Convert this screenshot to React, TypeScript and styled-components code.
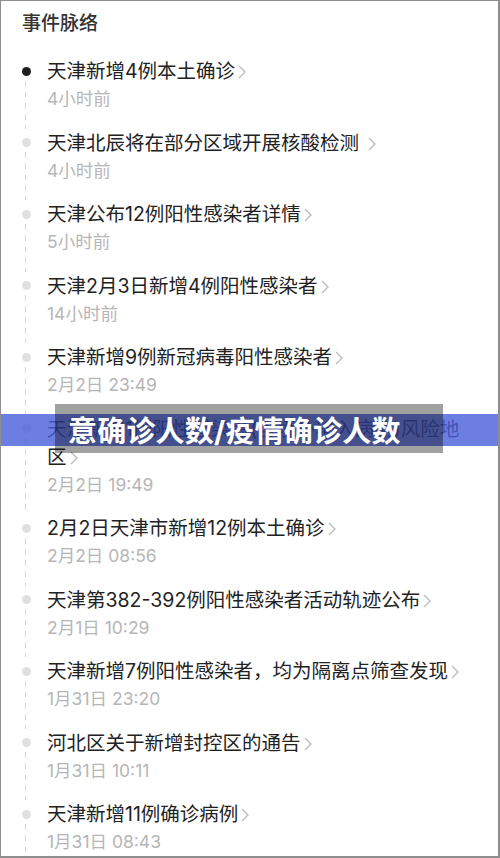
import styled, {createGlobalStyle} from "styled-components";

const GlobalStyle = createGlobalStyle`
    body {
        margin: 0;
        background: #fff;
        font-family: Inter, "Noto Sans CJK SC", sans-serif;
    }
`

type Event = {
    title: string
    time: string
}

const events: Event[] = [
    {title: "天津新增4例本土确诊", time: "4小时前"},
    {title: "天津北辰将在部分区域开展核酸检测 ", time: "4小时前"},
    {title: "天津公布12例阳性感染者详情", time: "5小时前"},
    {title: "天津2月3日新增4例阳性感染者", time: "14小时前"},
    {title: "天津新增9例新冠病毒阳性感染者", time: "2月2日 23:49"},
    {title: "天津新增1例阳性感染者(含境外输入病例)风险地区", time: "2月2日 19:49"},
    {title: "2月2日天津市新增12例本土确诊", time: "2月2日 08:56"},
    {title: "天津第382-392例阳性感染者活动轨迹公布", time: "2月1日 10:29"},
    {title: "天津新增7例阳性感染者，均为隔离点筛查发现", time: "1月31日 23:20"},
    {title: "河北区关于新增封控区的通告", time: "1月31日 10:11"},
    {title: "天津新增11例确诊病例", time: "1月31日 08:43"},
]

const Chevron = () => (
    <ChevronIcon viewBox="0 0 8 14" width="8" height="14">
        <polyline points="1,1 7,7 1,13" fill="none" stroke="#bdbdbd" strokeWidth="1.4"/>
    </ChevronIcon>
)

export default function App() {
    return (
        <Frame>
            <GlobalStyle/>
            <Heading>事件脉络</Heading>
            <Timeline>
                {events.map((event, i) => (
                    <Item key={i}>
                        <Marker>
                            <Dot $active={i === 0}/>
                            <Trail/>
                        </Marker>
                        <Body>
                            <Title>{event.title}<Chevron/></Title>
                            <Time>{event.time}</Time>
                        </Body>
                    </Item>
                ))}
            </Timeline>
            <Highlight/>
            <Caption>意确诊人数/疫情确诊人数</Caption>
        </Frame>
    )
}

const Frame = styled.div`
    position: relative;
    box-sizing: border-box;
    width: 500px;
    height: 858px;
    overflow: hidden;
    background: #fff;
    border: 1px solid #8e8e8e;
    border-right-width: 2px;
    border-bottom-width: 2px;
    padding: 9px 28px 0 21px;
`

const Heading = styled.h1`
    margin: 0;
    font-size: 19px;
    line-height: 28px;
    font-weight: 500;
    color: #333;
`

const Timeline = styled.div`
    margin-top: 19px;
`

const Item = styled.div`
    display: grid;
    grid-template-columns: 9px 1fr;
    column-gap: 16px;
`

const Marker = styled.div`
    display: flex;
    flex-direction: column;
    align-items: center;
`

const Dot = styled.div<{ $active: boolean }>`
    flex: none;
    width: 9px;
    height: 9px;
    margin-top: 9.5px;
    border-radius: 50%;
    background: ${p => p.$active ? "#1e1e1e" : "#e0e0e0"};
`

const Trail = styled.div`
    flex: 1;
    width: 1px;
    margin: 5px 0 0 -2px;
    background: repeating-linear-gradient(to bottom, #dadada 0 6px, transparent 6px 11px);
`

const Body = styled.div`
    padding-bottom: 15.5px;
`

const Title = styled.div`
    font-size: 19.5px;
    line-height: 28px;
    color: #222;
`

const ChevronIcon = styled.svg`
    display: inline-block;
    margin-left: 3px;
    vertical-align: -1px;
`

const Time = styled.div`
    font-size: 17.5px;
    line-height: 28px;
    color: #b6b6b6;
`

const Highlight = styled.div`
    position: absolute;
    left: 0;
    right: 0;
    top: 413px;
    height: 32px;
    background: rgba(72, 94, 218, 0.8);
`

const Caption = styled.div`
    position: absolute;
    left: 54px;
    top: 403px;
    width: 388px;
    height: 49px;
    box-sizing: border-box;
    padding-left: 13px;
    display: flex;
    align-items: center;
    background: rgba(0, 0, 0, 0.37);
    color: #fff;
    font-size: 29px;
    font-weight: 700;
    letter-spacing: 0.2px;
`
